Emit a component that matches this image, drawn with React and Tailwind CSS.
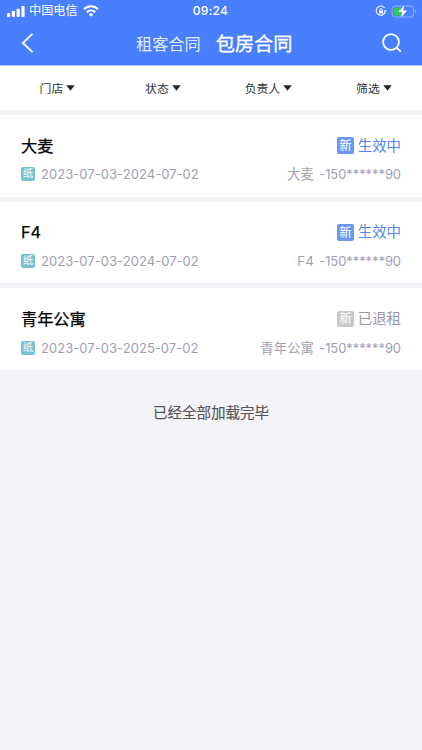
const contracts = [
  { name: '大麦', period: '2023-07-03-2024-07-02', status: '生效中', active: true },
  { name: 'F4', period: '2023-07-03-2024-07-02', status: '生效中', active: true },
  { name: '青年公寓', period: '2023-07-03-2025-07-02', status: '已退租', active: false },
];

function StatusBar() {
  return (
    <div className="grid h-[22px] grid-cols-[1fr_auto_1fr] items-center pl-[7px] pr-[5px] text-white">
      <div className="flex items-center">
        <svg width="18" height="11" viewBox="0 0 18 11" fill="currentColor">
          <rect x="0" y="7" width="3.2" height="4" rx="1" />
          <rect x="4.8" y="5" width="3.2" height="6" rx="1" />
          <rect x="9.6" y="2.7" width="3.2" height="8.3" rx="1" />
          <rect x="14.4" y="0" width="3.2" height="11" rx="1" />
        </svg>
        <span className="ml-1 text-[12.2px] leading-[22px]">中国电信</span>
        <svg className="ml-[5px]" width="16" height="12" viewBox="0 0 16 12" fill="none" stroke="currentColor" strokeWidth="2">
          <path d="M1.1 4.3C5 .3 11 .3 14.9 4.3" />
          <path d="M3.8 7.2c2.4-2.3 6-2.3 8.4 0" />
          <path d="M5.7 9.2c1.3-1.2 3.3-1.2 4.6 0L8 11.7z" fill="currentColor" stroke="none" />
        </svg>
      </div>
      <span className="pr-[3px] text-[12px] font-medium leading-[22px] tracking-[0.3px]">09:24</span>
      <div className="flex items-center justify-end">
        <svg width="12" height="12" viewBox="0 0 12 12" fill="none" stroke="currentColor">
          <path d="M9.6 3A4.6 4.6 0 1 0 10.3 6.4" strokeWidth="1.1" />
          <path d="M8.7 5.2h3L10.2 7.4z" fill="currentColor" stroke="none" />
          <rect x="4" y="5.4" width="4" height="3" rx=".4" fill="currentColor" stroke="none" />
          <path d="M4.8 5.6V4.7a1.2 1.2 0 0 1 2.4 0v.9" strokeWidth=".8" />
        </svg>
        <svg className="ml-1" width="26" height="13" viewBox="0 0 26 13">
          <rect x="1" y="1" width="21.5" height="11" rx="3" fill="none" stroke="#8fb1ff" />
          <path d="M24 4.6c1.6.6 1.6 3.2 0 3.8z" fill="#8fb1ff" />
          <rect x="2.5" y="2.5" width="9" height="8" rx="1.6" fill="#34c759" />
          <path d="M13.3 .4 7.2 7.1h4L9.9 12.6 16.3 5.6h-4z" fill="white" stroke="#477fff" strokeWidth=".7" paintOrder="stroke" />
        </svg>
      </div>
    </div>
  );
}

function NavBar() {
  return (
    <nav className="grid h-[42px] grid-cols-[136px_1fr_auto] items-center pr-5 text-white">
      <svg className="ml-[21px]" width="13" height="20" viewBox="0 0 13 20" fill="none" stroke="currentColor" strokeWidth="1.8">
        <path d="M11.5 .8 1.8 10l9.7 9.2" />
      </svg>
      <div className="flex items-center gap-[15px] pt-[2px]">
        <span className="text-[16.2px] leading-6 text-[#e3ebff]">租客合同</span>
        <span className="text-[19.2px] leading-6 [-webkit-text-stroke:0.3px_currentColor]">包房合同</span>
      </div>
      <svg width="20" height="20" viewBox="0 0 20 20" fill="none" stroke="currentColor" strokeWidth="1.8">
        <circle cx="9" cy="9" r="7.9" />
        <path d="m14.6 14.6 4.2 4" />
      </svg>
    </nav>
  );
}

function Filter({ label }) {
  return (
    <button className="flex items-center justify-center gap-[3px] text-[11.9px] leading-[44px] text-[#333336]">
      <span className="pt-px">{label}</span>
      <svg className="-translate-y-px" width="9" height="6" viewBox="0 0 9 6" fill="#242428">
        <path d="M.3.3h8.4L4.5 5.8z" />
      </svg>
    </button>
  );
}

function ContractCard({ name, period, status, active }) {
  return (
    <article className="flex h-[81.7px] flex-col bg-white px-[21px] pt-[18.6px]">
      <div className="flex h-6 items-center justify-between">
        <h2 className="text-[16.2px] leading-6 text-black [-webkit-text-stroke:0.25px_currentColor]">{name}</h2>
        <div className="flex items-center gap-1">
          <span className={`flex size-[16.5px] items-center justify-center rounded-[2px] pt-px text-[12.5px] leading-4 text-white ${active ? 'bg-[#6c98f3]' : 'bg-[#c8c8c9]'}`}>新</span>
          <span className={`text-[14.4px] leading-6 ${active ? 'text-[#5684e8]' : 'text-[#9696a8]'}`}>{status}</span>
        </div>
      </div>
      <div className="mt-[6.9px] flex h-5 items-center justify-between text-[13px] leading-5 text-[#a0a0b0]">
        <div className="flex items-center gap-[6px]">
          <span className="flex size-[14px] items-center justify-center rounded-[2px] bg-[#75c1cd] text-[10.5px] leading-[14px] text-white">纸</span>
          <span className="tracking-[0.05px]">{period}</span>
        </div>
        <div className="flex gap-[5.5px]">
          <span className="text-[13.3px]">{name}</span>
          <span className="tracking-[-0.08px]">-150******90</span>
        </div>
      </div>
    </article>
  );
}

export default function App() {
  return (
    <div className="min-h-screen bg-[#f3f3f8] font-['Inter','Noto_Sans_CJK_SC',sans-serif]">
      <header className="h-[66px] border-b border-[#a9c4ff] bg-[#477fff]">
        <StatusBar />
        <NavBar />
      </header>
      <div className="grid h-11 grid-cols-[115px_96px_115px_96px] bg-white">
        <Filter label="门店" />
        <Filter label="状态" />
        <Filter label="负责人" />
        <Filter label="筛选" />
      </div>
      <main className="flex flex-col gap-[5px] pt-[5px]">
        {contracts.map((contract) => (
          <ContractCard key={contract.name} {...contract} />
        ))}
      </main>
      <p className="mt-[31px] text-center text-[14.5px] leading-6 text-[#555558] [-webkit-text-stroke:0.15px_currentColor]">已经全部加载完毕</p>
    </div>
  );
}
